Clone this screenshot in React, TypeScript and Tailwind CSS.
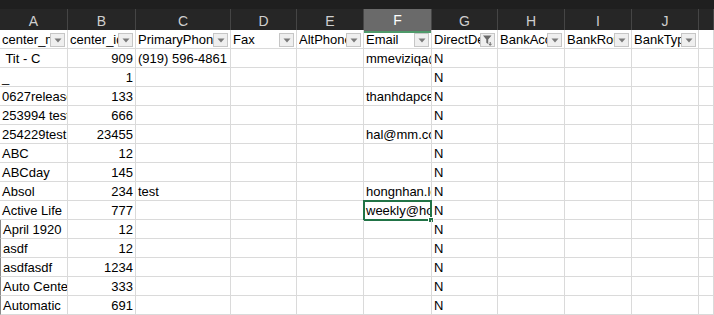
const GRID = 'grid grid-cols-[68px_68px_95px_66px_67px_68px_66px_67px_67px_67px_1fr]';
const LETTERS = ['A', 'B', 'C', 'D', 'E', 'F', 'G', 'H', 'I', 'J', ''];
const FIELDS = ['center_name', 'center_id', 'PrimaryPhone', 'Fax', 'AltPhone', 'Email', 'DirectDeposit', 'BankAccount', 'BankRouting', 'BankType'];

type Row = { name: string; id: number; phone?: string; email?: string };

const ROWS: Row[] = [
  { name: ' Tit - C', id: 909, phone: '(919) 596-4861', email: 'mmeviziqa@gmail.com' },
  { name: '_', id: 1 },
  { name: '0627release', id: 133, email: 'thanhdapcenter@mm.com' },
  { name: '253994 test', id: 666 },
  { name: '254229test center', id: 23455, email: 'hal@mm.com' },
  { name: 'ABC', id: 12 },
  { name: 'ABCday', id: 145 },
  { name: 'Absol', id: 234, phone: 'test', email: 'hongnhan.le@mm.com' },
  { name: 'Active Life', id: 777, email: 'weekly@hotmail.com' },
  { name: 'April 1920', id: 12 },
  { name: 'asdf', id: 12 },
  { name: 'asdfasdf', id: 1234 },
  { name: 'Auto Center', id: 333 },
  { name: 'Automatic', id: 691 },
];

const cell = 'relative h-[19px] border-r border-b border-[#dadada] overflow-hidden whitespace-nowrap leading-[19px]';

function FilterButton({ active }: { active?: boolean }) {
  return (
    <span className="absolute right-[2px] top-[3px] flex h-[14px] w-[15px] items-center justify-center border border-[#c6c6c6] bg-[#efefef]">
      {active ? (
        <svg width="11" height="12" viewBox="0 0 11 12">
          <path d="M1 1.5h8.5L6.2 5.5v4.5L4.3 8.8V5.5z" fill="#6a6a6a" />
          <path d="M8.2 8v3M6.8 9.8l1.4 1.6 1.4-1.6" stroke="#6a6a6a" strokeWidth="1" fill="none" />
        </svg>
      ) : (
        <svg width="8" height="5" viewBox="0 0 8 5">
          <path d="M0.5 0.5h7L4 4.5z" fill="#7a7a7a" />
        </svg>
      )}
    </span>
  );
}

export default function App() {
  return (
    <div className="h-[315px] w-[714px] overflow-hidden bg-white font-['Liberation_Sans',Arial,sans-serif] text-[13px] text-black">
      {/* column letters */}
      <div className="h-[9px] bg-[#1f1f1f]" />
      <div className={`${GRID} h-[21px] bg-[#262626]`}>
        {LETTERS.map((l, i) => (
          <div
            key={i}
            className={`flex items-center justify-center border-r border-[#454545] pt-[1px] text-[14px] ${
              l === 'F' ? 'border-b-2 border-b-[#4f9a6a] bg-[#6a6a6a] text-white' : 'text-[#cfcfcf]'
            }`}
          >
            {l}
          </div>
        ))}
      </div>

      {/* header row with filters */}
      <div className={GRID}>
        {FIELDS.map((f, i) => (
          <div key={f} className={`${cell} pl-[2px]`}>
            <div className="mr-[17px] overflow-hidden">{f}</div>
            <FilterButton active={i === 6} />
          </div>
        ))}
        <div className={cell} />
      </div>

      {ROWS.map((r, ri) => (
        <div key={ri} className={`${GRID} relative`}>
          <div className={`${cell} whitespace-pre pl-[2px] ${ri >= 9 ? 'border-l border-l-[#8a8a8a]' : ''}`}>{r.name}</div>
          <div className={`${cell} pr-[2px] text-right`}>{r.id}</div>
          <div className={`${cell} pl-[2px]`}>{r.phone}</div>
          <div className={cell} />
          <div className={cell} />
          <div className={`${cell} pl-[2px]`}>{r.email}</div>
          <div className={`${cell} pl-[2px]`}>N</div>
          <div className={cell} />
          <div className={cell} />
          <div className={cell} />
          <div className={cell} />
          {ri === 8 && (
            <span className="absolute left-[363px] top-[-1px] h-[21px] w-[69px] border-2 border-[#217346]">
              <span className="absolute -bottom-[4px] -right-[4px] h-[6px] w-[6px] border border-white bg-[#217346]" />
            </span>
          )}
        </div>
      ))}
    </div>
  );
}
